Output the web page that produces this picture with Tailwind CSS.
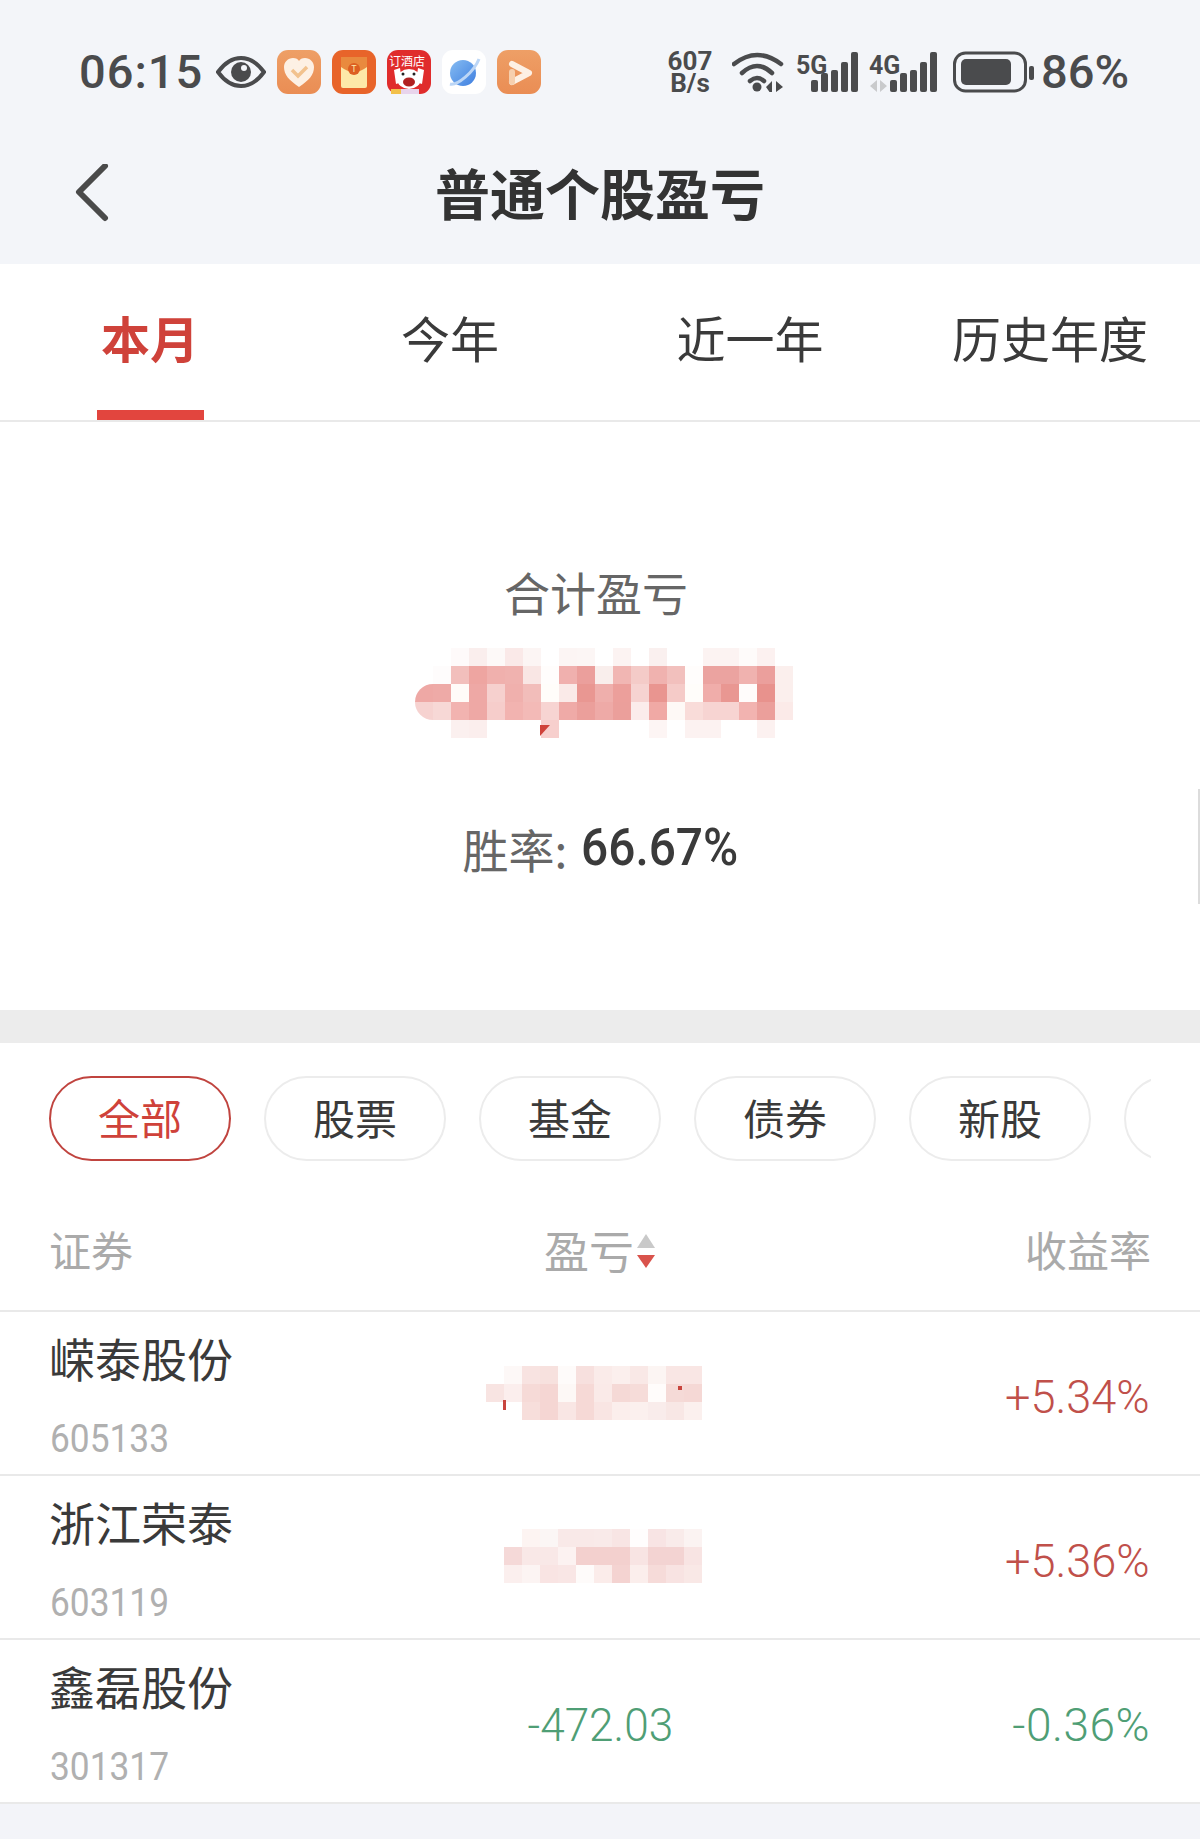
<!DOCTYPE html>
<html lang="zh-CN">
<head>
    <meta charset="UTF-8">
    <meta name="viewport" content="width=device-width, initial-scale=1.0">
    <title>普通个股盈亏</title>
    <script src="https://cdn.jsdelivr.net/npm/@tailwindcss/browser@4"></script>
</head>
<body class="relative w-[1200px] h-[1839px] overflow-hidden bg-[#f3f4f9] text-[#3a3a3a] font-['Noto_Sans_CJK_SC','Noto_Sans',sans-serif]">

    <!-- status bar + nav -->
    <header class="h-[264px] bg-[#f3f5f9]">
        <div class="flex items-center h-[44px] translate-y-[50px] text-[#4a4b4d]">
            <span class="ml-[79px] w-[122px] text-[47px] leading-[44px] font-medium tracking-[1px] font-['Roboto',sans-serif]">06:15</span>
            <svg class="ml-[15px]" width="50" height="34" viewBox="0 0 50 34">
                <path d="M2 17C10 6 17 3 25 3s15 3 23 14c-8 11-15 14-23 14S10 28 2 17z" fill="none" stroke="#4a4b4d" stroke-width="4"/>
                <circle cx="25" cy="17" r="10" fill="#4a4b4d"/><circle cx="28" cy="13" r="3" fill="#f3f5f9"/>
            </svg>
            <div class="flex gap-[11px] ml-[11px]">
                <svg width="44" height="44" viewBox="0 0 44 44">
                    <defs><linearGradient id="o1" x1="0" y1="0" x2="0" y2="1"><stop offset="0" stop-color="#ee9f66"/><stop offset="1" stop-color="#ea8d54"/></linearGradient></defs>
                    <rect width="44" height="44" rx="11" fill="url(#o1)"/>
                    <path d="M22 37C12 30 7 25 7 17c0-5 4-9 9-9 3 0 5 1 6 3 1-2 3-3 6-3 5 0 9 4 9 9 0 8-5 13-15 20z" fill="#fdf0e4"/>
                    <path d="M15 20l6 6 9-9" fill="none" stroke="#f2c28e" stroke-width="3.5"/>
                </svg>
                <svg width="44" height="44" viewBox="0 0 44 44">
                    <rect width="44" height="44" rx="11" fill="#e8642a"/>
                    <rect x="9" y="7" width="26" height="31" rx="2" fill="#fde9a8"/>
                    <path d="M9 7h26v10q-13 10-26 0z" fill="#e98a3e"/>
                    <circle cx="22" cy="19" r="6" fill="#dd5f22"/>
                    <text x="22" y="22" font-size="9" fill="#fde9a8" text-anchor="middle">T</text>
                </svg>
                <svg width="44" height="44" viewBox="0 0 44 44">
                    <rect width="44" height="44" rx="11" fill="#e02c2c"/>
                    <text x="20" y="16" font-size="12" fill="#fff" text-anchor="middle">订酒店</text>
                    <path d="M7 20l6-2 2 14-6 2zM37 20l-6-2-2 14 6 2z" fill="#fff"/>
                    <ellipse cx="22" cy="29" rx="12" ry="10" fill="#fff"/>
                    <ellipse cx="22" cy="32" rx="6" ry="4.5" fill="#b02020"/>
                    <circle cx="16" cy="24" r="1.5" fill="#222"/><circle cx="27" cy="24" r="1.5" fill="#222"/>
                    <rect x="4" y="39" width="10" height="5" fill="#f2c04a"/>
                    <rect x="14" y="39" width="18" height="5" fill="#e8d4ec"/>
                </svg>
                <svg width="44" height="44" viewBox="0 0 44 44">
                    <defs><linearGradient id="b1" x1="0" y1="0" x2="1" y2="1"><stop offset="0" stop-color="#86bcf2"/><stop offset="1" stop-color="#3f7fe0"/></linearGradient></defs>
                    <rect width="44" height="44" rx="11" fill="#fff"/>
                    <circle cx="21" cy="23" r="13" fill="url(#b1)"/>
                    <path d="M8 34C15 36 32 22 37 9" fill="none" stroke="#bcd6f6" stroke-width="3"/>
                </svg>
                <svg width="44" height="44" viewBox="0 0 44 44">
                    <rect width="44" height="44" rx="11" fill="url(#o1)"/>
                    <path d="M15 14l17 9-17 9" fill="none" stroke="#fdf0e4" stroke-width="6" stroke-linejoin="round" stroke-linecap="round"/>
                    <path d="M15 22v10" stroke="#f6cfae" stroke-width="6" stroke-linecap="round"/>
                </svg>
            </div>
            <div class="ml-[125px] w-[48px] text-center text-[26px] leading-[22px] font-bold font-['Roboto',sans-serif]">607<br>B/s</div>
            <svg class="ml-[18px]" width="52" height="42" viewBox="0 0 52 42" fill="none" stroke="#4a4b4d" stroke-width="4.5" stroke-linecap="round">
                <path d="M2 13Q25-5 49 13"/><path d="M10 22Q25 8 40 22"/><path d="M18 30Q25 24 32 30"/>
                <circle cx="25" cy="36" r="4.5" fill="#4a4b4d" stroke="none"/>
                <path d="M34 36l6-6v11h-2.500zM44 30l7 6-7 5z" fill="#4a4b4d" stroke="none"/>
            </svg>
            <svg class="ml-[12px]" width="62" height="42" viewBox="0 0 62 42">
                <text x="0" y="23" font-size="25" font-weight="700" fill="#4a4b4d" font-family="Roboto">5G</text>
                <g fill="#4a4b4d"><rect x="15" y="29" width="7" height="12" rx="2"/><rect x="25" y="22" width="7" height="19" rx="2"/><rect x="35" y="19" width="7" height="22" rx="2"/><rect x="45" y="11" width="7" height="30" rx="2"/><rect x="55" y="1" width="7" height="40" rx="2"/></g>
            </svg>
            <svg class="ml-[11px]" width="68" height="42" viewBox="0 0 68 42">
                <text x="0" y="23" font-size="25" font-weight="700" fill="#4a4b4d" font-family="Roboto">4G</text>
                <path d="M1 35l7-6v12zM11 29l7 6-7 6z" fill="#c9cacc"/>
                <g fill="#4a4b4d"><rect x="21" y="29" width="7" height="12" rx="2"/><rect x="31" y="22" width="7" height="19" rx="2"/><rect x="41" y="19" width="7" height="22" rx="2"/><rect x="51" y="11" width="7" height="30" rx="2"/><rect x="61" y="1" width="7" height="40" rx="2"/></g>
            </svg>
            <svg class="ml-[16px]" width="82" height="42" viewBox="0 0 82 42">
                <rect x="1.500" y="2" width="71" height="38" rx="11" fill="none" stroke="#4a4b4d" stroke-width="3"/>
                <rect x="8" y="8" width="50" height="26" rx="5" fill="#4a4b4d"/>
                <rect x="76" y="15" width="5" height="14" rx="2" fill="#4a4b4d"/>
            </svg>
            <span class="ml-[6px] text-[47px] leading-[44px] font-medium font-['Roboto',sans-serif]">86%</span>
        </div>
        <div class="relative flex items-center justify-center h-[60px] mt-[117px]">
            <svg class="absolute left-[70px] top-[3px]" width="42" height="60" viewBox="0 0 42 60">
                <path d="M35 2L9 28l26 26" fill="none" stroke="#4a4a4a" stroke-width="6" stroke-linecap="round" stroke-linejoin="round"/>
            </svg>
            <h1 class="text-[55px] leading-[60px] font-bold text-[#333]">普通个股盈亏</h1>
        </div>
    </header>

    <!-- tabs -->
    <nav class="grid grid-cols-4 h-[158px] bg-white border-b-2 border-[#e9e9e9] text-center text-[49px]">
        <div class="relative pt-[40px] leading-[66px] font-bold text-[#cf423a]">本月
            <div class="absolute left-[97px] bottom-0 w-[107px] h-[10px] bg-[#e2453e]"></div>
        </div>
        <div class="pt-[40px] leading-[66px]">今年</div>
        <div class="pt-[40px] leading-[66px]">近一年</div>
        <div class="pt-[40px] leading-[66px]">历史年度</div>
    </nav>

    <!-- summary -->
    <section class="flex flex-col items-center h-[588px] bg-white pt-[139px]">
        <div class="text-[46px] leading-[60px] text-[#666] -translate-x-[4px]">合计盈亏</div>
        <div class="relative mt-[27px] w-[378px] h-[90px] translate-x-[4px]">
            <div id="mosaic-total"></div>
            <svg class="absolute left-[125px] top-[77px]" width="10" height="11" viewBox="0 0 10 11"><path d="M0 0h10L0 11z" fill="#cf423a"/></svg>
        </div>
        <div class="flex items-center mt-[80px] h-[60px]">
            <span class="text-[46px] text-[#666]">胜率:</span>
            <span class="inline-block w-[156px] ml-[14px] text-[52px] font-medium whitespace-nowrap origin-left scale-x-[0.92] font-['Roboto',sans-serif]">66.67%</span>
        </div>
    </section>

    <!-- list -->
    <div class="h-[33px] bg-[#ececec]"></div>
    <section class="bg-white border-b-2 border-[#e9e9e9]">
        <div class="flex gap-[33px] w-[1151px] overflow-hidden pl-[49px] pt-[33px] text-[42px] leading-[77px] text-center">
            <div class="shrink-0 w-[182px] h-[85px] rounded-full border-2 border-[#c0443f] text-[#cf423a]">全部</div>
            <div class="shrink-0 w-[182px] h-[85px] rounded-full border-2 border-[#ececec]">股票</div>
            <div class="shrink-0 w-[182px] h-[85px] rounded-full border-2 border-[#ececec]">基金</div>
            <div class="shrink-0 w-[182px] h-[85px] rounded-full border-2 border-[#ececec]">债券</div>
            <div class="shrink-0 w-[182px] h-[85px] rounded-full border-2 border-[#ececec]">新股</div>
            <div class="shrink-0 w-[182px] h-[85px] rounded-full border-2 border-[#ececec]"></div>
        </div>

        <div class="grid grid-cols-3 items-center h-[151px] pl-[49px] pr-[49px] pt-[26px] border-b-2 border-[#e9e9e9] text-[42px] text-[#aaa]">
            <div>证券</div>
            <div class="flex items-center justify-center mt-[3px] text-[45px]">盈亏
                <svg class="ml-[2px] mt-[2px]" width="20" height="34" viewBox="0 0 20 34"><path d="M10 0l9 14H1z" fill="#c9c9c9"/><path d="M1 21h18l-9 13z" fill="#d9534c"/></svg>
            </div>
            <div class="text-right">收益率</div>
        </div>

        <div class="grid grid-cols-3 items-center h-[164px] px-[50px] border-b-2 border-[#e9e9e9]">
            <div class="mt-[2px]">
                <div class="text-[46px] leading-[60px] -translate-x-[1px]">嵘泰股份</div>
                <div class="mt-[30px] h-[44px] text-[39px] leading-[44px] text-[#b0b0b0] origin-left scale-x-[0.905] font-['Roboto',sans-serif]">605133</div>
            </div>
            <div class="relative h-full">
                <div class="absolute left-[69px] top-[54px]" id="mosaic-a"></div>
                <div class="absolute left-[86px] top-[88px] w-[3px] h-[10px] bg-[#c8453e]"></div>
                <div class="absolute left-[261px] top-[74px] w-[4px] h-[4px] bg-[#c8453e]"></div>
            </div>
            <div class="mt-[9px] text-right text-[46px] font-light text-[#c0504a] origin-right scale-x-[0.98] font-['Roboto',sans-serif]">+5.34%</div>
        </div>

        <div class="grid grid-cols-3 items-center h-[164px] px-[50px] border-b-2 border-[#e9e9e9]">
            <div class="mt-[2px]">
                <div class="text-[46px] leading-[60px] -translate-x-[1px]">浙江荣泰</div>
                <div class="mt-[30px] h-[44px] text-[39px] leading-[44px] text-[#b0b0b0] origin-left scale-x-[0.905] font-['Roboto',sans-serif]">603119</div>
            </div>
            <div class="relative h-full">
                <div class="absolute left-[87px] top-[53px]" id="mosaic-b"></div>
            </div>
            <div class="mt-[9px] text-right text-[46px] font-light text-[#c0504a] origin-right scale-x-[0.98] font-['Roboto',sans-serif]">+5.36%</div>
        </div>

        <div class="grid grid-cols-3 items-center h-[162px] px-[50px]">
            <div class="mt-[2px]">
                <div class="text-[46px] leading-[60px] -translate-x-[1px]">鑫磊股份</div>
                <div class="mt-[30px] h-[44px] text-[39px] leading-[44px] text-[#b0b0b0] origin-left scale-x-[0.905] font-['Roboto',sans-serif]">301317</div>
            </div>
            <div class="mt-[9px] text-center text-[46px] font-light text-[#4f9e75] scale-x-[0.96] font-['Roboto',sans-serif]">-472.03</div>
            <div class="mt-[9px] text-right text-[46px] font-light tracking-[0.5px] text-[#4f9e75] font-['Roboto',sans-serif]">-0.36%</div>
        </div>
    </section>

    <!-- scroll indicator -->
    <div class="absolute right-0 top-[789px] w-[2px] h-[115px] bg-[#dcdcdc]"></div>

    <script>
        // the redacted amounts, as mosaic cells
        const W = "#ffffff";
        const total = [
            [W,W,"#fefafa","#faeeed","#fdf9f8","#fae9e8","#fcf5f4",W,"#fcf5f4","#fcf6f5",W,"#fcf3f2",W,"#faf0ef",W,W,"#fcf3f2","#fcf3f2","#fefbfa","#fcf1f0",W],
            [W,"#fefcfc","#f2bfbc","#eea5a1","#f0b0ad","#f0b2af","#f9e6e4","#fffdfc","#f0b0ae","#eb9f9c","#f9eeec","#f1b6b3","#f4cbc8","#f0b2af","#f2c0bd","#fffdfc","#eba3a0","#eba3a0","#f0b2af","#eb9f9c","#fbefed"],
            ["#eea8a5","#eeaaa7","#fffbf8","#eea8a5","#f6d0ce","#f0b0ad","#f2bdba","#fffdfa","#faeae8","#e99792","#efafac","#ec9f9b","#f6d3d1","#e99590","#f5cbc8","#fffdfa","#f0adaa","#e99792","#fffcfb","#e8928d","#fbefed"],
            ["#f6d2d0","#f7d8d6","#f2b3b0","#eea8a5","#f6cdcb","#f2b3b0","#f3bab7","#f7d4d2","#efaaa7","#eb9f9b","#eeaaa7","#eb9f9b","#fbeceb","#f0a9a5","#fef9f6","#f9dcd9","#f7d4d2","#f7d4d2","#f2b3b0","#eb9f9b","#fbeae8"],
            [W,W,"#fbf0ef","#fbeeed",W,W,W,"#f7cfcd",W,W,W,W,W,"#fdf5f4",W,"#fcf2f1","#fcf2f1",W,W,"#fcf1f0",W]
        ];
        const rowA = [
            [W,"#fdf8f7","#f8e3e1","#f7e1de","#fefbfa","#f7e0de","#faebe9","#fbefed","#f9e8e6","#fcf5f3","#f9e6e4","#f9e6e4"],
            ["#f8e4e2","#fbeeed","#f6dad7","#f5d6d3","#fdf8f6","#f6d9d6","#faeae8","#f5d9d6","#f6dcd9","#fffcfb","#f5dad7","#f5d8d5"],
            [W,W,"#f7dedb","#f5d6d3","#f9e6e4","#f6d9d6","#f9e5e3","#fbeeec","#fbf0ee","#f9eceb","#f8e7e5","#fbf0ee"]
        ];
        const rowB = [
            [W,"#fdf4f2","#fbf6f5","#f9e9e8","#f9e9e8","#f9eae9","#f8e5e4","#fffdfd","#f8e4e4","#f9ebea","#fbf3f2"],
            ["#f5d9d8","#f9e8e7","#f9e8e7","#fcf2f1","#f3d0ce","#f3d0ce","#f3d0ce","#f8e4e3","#f3d3d2","#f3d3d2","#f8e4e3"],
            ["#fbefee","#fcf4f3","#f9e4e3","#f9e6e5","#fefbfa","#fbecea","#f4d3d1","#fbeeec","#f6dbd9","#f8e3e2","#f9e8e6"]
        ];

        function drawMosaic(id, rows) {
            const box = document.getElementById(id);
            rows.forEach(function(row) {
                const line = document.createElement("div");
                line.className = "flex";
                row.forEach(function(color) {
                    const cell = document.createElement("div");
                    cell.className = "shrink-0 w-[18px] h-[18px]";
                    cell.style.background = color;
                    line.appendChild(cell);
                });
                box.appendChild(line);
            });
        }

        drawMosaic("mosaic-total", total);
        drawMosaic("mosaic-a", rowA);
        drawMosaic("mosaic-b", rowB);

        // left end of the total amount is rounded in the picture
        const totalBox = document.getElementById("mosaic-total");
        totalBox.children[2].children[0].classList.add("rounded-tl-[18px]");
        totalBox.children[3].children[0].classList.add("rounded-bl-[18px]");
    </script>
</body>
</html>
